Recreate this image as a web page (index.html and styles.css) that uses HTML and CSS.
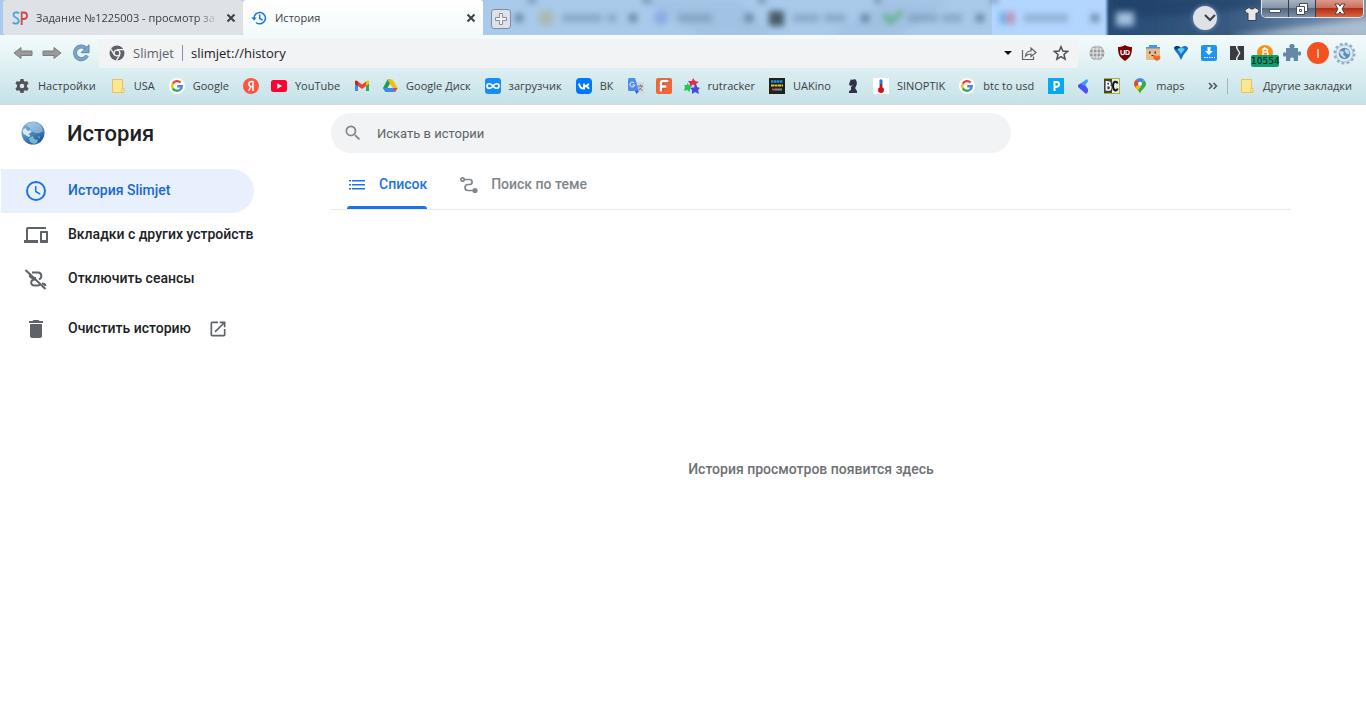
FILE: index.html
```
<!DOCTYPE html>
<html lang="ru">
<head>
    <meta charset="UTF-8">
    <title>История</title>
    <link rel="stylesheet" href="styles.css">
</head>
<body>
<svg class="defs" aria-hidden="true">
    <symbol id="folder" viewBox="0 0 16 16"><path d="M2.500 1.500h10v9h1.500v4h-11.500z" fill="#ffe694" stroke="#eac54b"/><path d="M11.500 14v-2.500l1-1.500" fill="none" stroke="#eac54b"/></symbol>
    <symbol id="google" viewBox="0 0 16 16">
        <circle cx="8" cy="8" r="8" fill="#fff"/>
        <g fill="none" stroke-width="2.400">
            <path d="M11.500 4.600A4.800 4.800 0 0 0 3.800 5.700" stroke="#ea4335"/>
            <path d="M3.800 5.700a4.800 4.800 0 0 0 0 4.600" stroke="#fbbc05"/>
            <path d="M3.800 10.300a4.800 4.800 0 0 0 7.300 1.300" stroke="#34a853"/>
            <path d="M11.100 11.600A4.600 4.600 0 0 0 12.700 8.200H8.200" stroke="#4285f4"/>
        </g>
    </symbol>
    <linearGradient id="sky" x1="0" y1="0" x2="0.600" y2="1"><stop offset="0" stop-color="#8db8dc"/><stop offset=".45" stop-color="#5a97cb"/><stop offset="1" stop-color="#1d5796"/></linearGradient>
    <symbol id="earth" viewBox="0 0 24 24">
        <circle cx="12" cy="12" r="11.500" fill="url(#sky)"/>
        <path d="M1.500 9l3-2 2 3 3-1 1 2-3 2 2 2-2 1-3-2-2-1z" fill="#eef6f8" opacity=".85"/>
        <path d="M8 17l4-2 1 3 4 1-1 3-3 1-4-2zM17 15l2 1-1 2z" fill="#8fd0dd" opacity=".75"/>
        <path d="M5 4a10 10 0 0 1 17 6c-3 3-9 3-12-1-1-2-3-3-5-5z" fill="#e3f1fa" opacity=".4"/>
    </symbol>
</svg>

<header class="browser">
    <div class="tabstrip">
        <!-- соседние окна за стеклом -->
        <svg class="glass" aria-hidden="true">
            <defs>
                <filter id="soft" x="-50%" y="-50%" width="200%" height="200%"><feGaussianBlur stdDeviation="3"/></filter>
                <filter id="edge" x="-10%" y="-50%" width="120%" height="200%"><feGaussianBlur stdDeviation="1.500"/></filter>
                <linearGradient id="dark"><stop offset="0" stop-color="#244a74"/><stop offset=".4" stop-color="#38597f"/><stop offset=".62" stop-color="#5a7a9d"/><stop offset="1" stop-color="#8ba3bd"/></linearGradient>
            </defs>
            <path d="M640 0l60 35h70l-30-35zM830 35l60-35h60l-50 35z" fill="#91b1d6" opacity=".3" filter="url(#soft)"/>
            <rect x="992" y="0" width="116" height="35" fill="#b2d6fe"/>
            <rect x="1107" y="-20" width="300" height="80" fill="url(#dark)" filter="url(#edge)"/>
            <path d="M1112 -5h150v12l-90 9-60 2z" fill="#1b3d66" opacity=".6" filter="url(#soft)"/>
            <path d="M1230 36l140-18v20z" fill="#c2d0df" opacity=".7" filter="url(#soft)"/>
            <g filter="url(#soft)">
                <g fill="#4f6987">
                    <path d="M515 14h8v8h-8zM629 14h8v8h-8zM745 14h8v8h-8zM861 14h8v8h-8zM976 14h8v8h-8zM1091 14h8v8h-8z" opacity=".75"/>
                    <path d="M562 14h40v8h-40zM607 14h10v8h-10zM678 14h34v8h-34zM793 14h26v8h-26zM824 14h22v8h-22zM908 14h30v8h-30zM942 14h20v8h-20zM1024 14h44v8h-44z" opacity=".35"/>
                    <path d="M528-3h8v6h-8zM643-3h8v6h-8zM758-3h8v6h-8zM874-3h8v6h-8zM990-3h8v6h-8z" opacity=".6"/>
                </g>
                <path d="M539 11h14v14h-14z" fill="#a9b09a" opacity=".7"/>
                <circle cx="661" cy="18" r="7" fill="#7fa2e2" opacity=".8"/>
                <path d="M769 11h15v15h-15z" fill="#4a5a68"/>
                <path d="M884 14l6 8 12-10" fill="none" stroke="#53ae70" stroke-width="4"/>
                <path d="M1000 12h7v12h-7z" fill="#4595d5" opacity=".7"/><path d="M1008 12h6v12h-6z" fill="#cb5c72" opacity=".7"/>
                <path d="M1116 12h18v14h-18z" fill="#a3c0dd"/>
            </g>
        </svg>
        <div class="tab">
            <svg class="icon" viewBox="0 0 16 16"><g fill="none" stroke-width="1.800"><path d="M7 3.500C5 1.500 1.500 2 1.500 4.700c0 3.500 5.300 2.600 5.300 6C6.800 14 3 14.500.7 12.500" stroke="#42a5de"/><path d="M9.700 15V2.500h2c4.500 0 4.500 6.500 0 6.500h-2" stroke="#d0484d"/></g></svg>
            <span class="tab-title faded">Задание №1225003 - просмотр за</span>
            <button class="tab-close" aria-label="Закрыть"><svg viewBox="0 0 10 10"><path d="M1.500 1.500l7 7M8.500 1.500l-7 7"/></svg></button>
        </div>
        <div class="tab active">
            <svg class="icon" viewBox="0 0 16 16"><g fill="none" stroke="#1a73e8" stroke-width="1.500"><path d="M3 8.500A5.700 5.700 0 1 1 5 12.500M8.700 4.500v4l3 1.700"/></g><path d="M.3 7.500h5.400L3 10.500z" fill="#1a73e8"/></svg>
            <span class="tab-title">История</span>
            <button class="tab-close" aria-label="Закрыть"><svg viewBox="0 0 10 10"><path d="M1.500 1.500l7 7M8.500 1.500l-7 7"/></svg></button>
        </div>
        <button class="new-tab" aria-label="Новая вкладка"><svg viewBox="0 0 18 18"><path d="M7.500 3.500h3v4h4v3h-4v4h-3v-4h-4v-3h4z" fill="#f1f3f5" stroke="#8b8f94"/></svg></button>
        <div class="window-tools">
            <button class="tab-search" aria-label="Поиск вкладок"><svg viewBox="0 0 24 24"><path d="M12 9l5 5 5-5" fill="none" stroke="#3c4043" stroke-width="2"/></svg></button>
            <button class="skin" aria-label="Темы"><svg class="icon" viewBox="0 0 16 16"><path d="M5 1.500L.7 4l1.800 3.500L4 7v7.500h8V7l1.500.5L15.300 4 11 1.500c-1.500 2-4.500 2-6 0z" fill="#e8e8e8" stroke="#37414c"/></svg></button>
            <div class="window-buttons">
                <button aria-label="Свернуть"><svg viewBox="0 0 14 14"><path d="M1.500 7.500h11v3h-11z" fill="#fff" stroke="#47505c"/></svg></button>
                <button aria-label="Развернуть"><svg viewBox="0 0 14 14"><path d="M4.500 1.500h8v8h-8z" fill="#fff" stroke="#47505c"/><path d="M1.500 4.500h8v8h-8zM4.500 7.500h2v2h-2z" fill="#fff" stroke="#47505c"/></svg></button>
                <button class="close" aria-label="Закрыть окно"><svg viewBox="0 0 14 14"><path d="M2 2h3.500L7 4.200 8.500 2H12L9 7l3 5H8.500L7 9.800 5.500 12H2l3-5z" fill="#fff" stroke="#593c40"/></svg></button>
            </div>
        </div>
    </div>

    <div class="toolbar">
        <nav class="nav-buttons">
            <button aria-label="Назад"><svg viewBox="0 0 20 16"><path d="M1 8l7-5.500v3.500h11v4.500H8v3z" fill="#999" stroke="#7d7d7d"/></svg></button>
            <button aria-label="Вперёд"><svg viewBox="0 0 20 16"><path d="M19 8l-7-5.500v3.500H1v4.500h11v3z" fill="#999" stroke="#7d7d7d"/></svg></button>
            <button aria-label="Обновить"><svg viewBox="0 0 20 18"><path d="M14.500 4.200a6.300 6.300 0 1 0 1.500 7.300" fill="none" stroke="#5f87a9" stroke-width="4"/><path d="M14.500 4.200a6.300 6.300 0 1 0 1.500 7.300" fill="none" stroke="#7ca5c8" stroke-width="2.500"/><path d="M18 .7v8h-8z" fill="#7ca5c8" stroke="#5f87a9"/></svg></button>
        </nav>
        <div class="omnibox">
            <svg class="chromium" viewBox="0 0 16 16"><circle cx="8" cy="8" r="7.500" fill="#5f6368"/><circle cx="8" cy="8" r="2.900" fill="#5f6368" stroke="#f1f3f4" stroke-width="1.300"/><path d="M8 4.700h7M5.200 9.700L1.700 3.900M10.900 9.700l-3.500 6" stroke="#f1f3f4" stroke-width="1.300"/></svg>
            <span class="origin">Slimjet</span>
            <input class="url" type="text" aria-label="Адрес" value="slimjet://history">
            <button aria-label="Список адресов"><svg viewBox="0 0 16 16"><path d="M4 6h8l-4 4z" fill="#111"/></svg></button>
            <button aria-label="Поделиться"><svg viewBox="0 0 16 16"><path d="M1.500 5v9.500h11v-3M4.500 11c.5-3.500 2-5 5.500-5V3l5 4.500-5 4V9c-2.500 0-4 .4-5.500 2z" fill="none" stroke="#5f6368" stroke-width="1.200"/></svg></button>
            <button class="star" aria-label="Добавить в закладки"><svg viewBox="0 0 16 16"><path d="M8 1.700l1.900 4.300 4.700.4-3.600 3.100 1.100 4.600L8 11.700l-4.100 2.400L5 9.500 1.400 6.400 6.100 6z" fill="none" stroke="#4d5156" stroke-width="1.500"/></svg></button>
        </div>
        <div class="extensions">
            <button aria-label="Прокси"><svg viewBox="0 0 16 16"><circle cx="8" cy="8" r="7.500" fill="#9b9b9b"/><path d="M8 0v16M0 8h16M1.500 4h13M1.500 12h13" stroke="#e7eded" fill="none"/><ellipse cx="8" cy="8" rx="4" ry="7.500" stroke="#e7eded" fill="none"/></svg></button>
            <button aria-label="uBlock Origin"><svg viewBox="0 0 16 16"><path d="M8 0c2 1.500 4.500 2 7 2 0 7-1 10-7 14C2 12 1 9 1 2c2.500 0 5-.5 7-2z" fill="#800000"/><path d="M4 5v3a1.700 1.700 0 0 0 3.400 0V5M9 5.500v4h1.300a2 2 0 0 0 0-4z" fill="none" stroke="#fff" stroke-width="1.200"/></svg></button>
            <button aria-label="Покупки"><svg viewBox="0 0 16 16"><path d="M4 3V0h8v3" fill="#4a93e1"/><rect x="1" y="2" width="14" height="13" rx="1" fill="#e8bb88"/><path d="M1 2h14v1.500H1z" fill="#4a93e1"/><path d="M4 6.500h1.500v2H4zM9.500 6.500H11v2H9.500zM6.500 10h2v1h-2z" fill="#3d332d"/><path d="M8 11.500c1-2 3-1 3.500 0 1-2 4-1 4 1 0 1.500-2 2.500-3.500 3.500-2-1-4-2.500-4-4.500z" fill="#f1682f"/></svg></button>
            <button aria-label="Фильтр"><svg viewBox="0 0 16 16"><path d="M1 3c2-3 5-2 7 0 2-2 5-3 7 0 0 3-4 5-5 8l-2 4-2-4C5 8 1 6 1 3z" fill="#1674ce"/><path d="M8 15V8L1 3c2-3 5-2 7 0z" fill="#0b3b80"/><path d="M4 4q4-2 8 0L8 9z" fill="#60cdf4"/></svg></button>
            <button aria-label="Загрузки"><svg viewBox="0 0 16 16"><rect width="16" height="16" rx="2" fill="#2094f3"/><path d="M6.500 2h3v4H12L8 10 4 6h2.500z" fill="#fff"/><path d="M3 12.500h11" stroke="#fff" stroke-dasharray="1.500 1"/></svg></button>
            <button aria-label="Тёмная тема"><svg viewBox="0 0 16 16"><path d="M1 1h6v2l3 5-3 5v2H1zM8.500 1H15v14H8.500v-2l3-5-3-5z" fill="#383b40"/></svg></button>
            <button class="btc" aria-label="Курс биткоина"><svg viewBox="0 0 16 16"><circle cx="8" cy="8" r="8" fill="#f7931a"/><path d="M6 3.500v8M6 4h3c2 0 2 3 0 3H6h3.500c2 0 2 3.500 0 3.500H6M7.700 2v2" fill="none" stroke="#fff" stroke-width="1.300"/></svg><span class="badge">10554</span></button>
            <button class="narrow" aria-label="Расширения"><svg class="puzzle" viewBox="0 0 18 18"><path d="M3 4h4C5.500 2 6.500 0 9 0s3.500 2 2 4h4v4c2-1.500 3-.5 3 1.500s-1 3-3 1.500v6h-4.500c1-2.500 0-3.500-1.500-3.500S6.500 14.500 7.500 17H3v-5c-2 1.500-3 .5-3-1.500S1 7.500 3 9z" fill="#6488a8"/></svg></button>
            <button class="narrow" aria-label="Профиль"><span class="avatar">I</span></button>
            <button class="narrow" aria-label="Меню"><svg class="gear" viewBox="0 0 24 24"><circle cx="12" cy="12" r="10" fill="none" stroke="#8fb2cc" stroke-width="3" stroke-dasharray="3 2.230"/><circle cx="12" cy="12" r="9" fill="#dfebf5" stroke="#9dbbd2"/><circle cx="12" cy="12" r="6" fill="#5c8db3"/><path d="M6.500 10l3-1 2 2-1 2 3 3-2 1-4-4zM13 7l4 2 0 4-3-1-2-3z" fill="#c4dcea"/></svg></button>
        </div>
    </div>

    <nav class="bookmarks">
        <a href="#"><svg class="icon" viewBox="0 0 16 16"><path d="M6.500 1h3l.4 2 1.300.7 1.900-.7 1.500 2.600L13 7v2l1.600 1.400-1.500 2.600-1.900-.7-1.300.7-.4 2h-3L6 13l-1.200-.7-1.900.7-1.500-2.600L3 9V7L1.400 5.600 2.900 3l1.900.7L6.100 3zM8 5.700a2.300 2.300 0 1 0 0 4.600 2.300 2.300 0 0 0 0-4.600z" fill="#505459"/></svg><span>Настройки</span></a>
        <a href="#"><svg class="icon"><use href="#folder"/></svg><span>USA</span></a>
        <a href="#"><svg class="icon"><use href="#google"/></svg><span>Google</span></a>
        <a href="#" aria-label="Яндекс"><svg class="icon" viewBox="0 0 16 16"><circle cx="8" cy="8" r="8" fill="#fc5540"/><path d="M10 13V3.500H8.500c-3.500 0-3.500 5 0 5H10M8 8.500L5.500 13" fill="none" stroke="#fff" stroke-width="1.500"/></svg></a>
        <a href="#"><svg class="icon" viewBox="0 0 16 16"><rect y="2" width="16" height="12" rx="2.500" fill="#f03"/><path d="M6.300 5.300L11 8l-4.700 2.700z" fill="#fff"/></svg><span>YouTube</span></a>
        <a href="#" aria-label="Gmail"><svg class="icon" viewBox="0 0 16 16"><path d="M1 4v9h3V6z" fill="#4285f4"/><path d="M12 6v7h3V4z" fill="#34a853"/><path d="M12 3.500V8l3-2.200V3.500c0-1.500-1.500-1.500-3 0z" fill="#fbbc04"/><path d="M4 3.500L8 6.500l4-3V8l-4 3-4-3z" fill="#ea4335"/><path d="M1 3.500v2.300L4 8V3.500c-1.500-1.500-3-1.500-3 0z" fill="#c5221f"/></svg></a>
        <a href="#"><svg class="icon" viewBox="0 0 16 16"><path d="M5.500 1.500h2.700L9.500 4l-5.700 9.800H3.500L1 10z" fill="#19a05b"/><path d="M5.500 1.500h5L15.500 10h-5z" fill="#fbbc04"/><path d="M1 10h14.500L13 14H3.500z" fill="#4285f4"/><path d="M15.500 10h-4L13 14z" fill="#ea4335"/><path d="M8 5.500L5.500 10h5z" fill="#d8edf0"/></svg><span>Google Диск</span></a>
        <a href="#"><svg class="icon" viewBox="0 0 16 16"><rect width="16" height="16" rx="3" fill="#188dfa"/><path d="M8 8c-2-3-6-3-6 0s4 3 6 0 6-3 6 0-4 3-6 0z" fill="none" stroke="#fff" stroke-width="1.700"/></svg><span>загрузчик</span></a>
        <a href="#"><svg class="icon" viewBox="0 0 16 16"><rect width="16" height="16" rx="4" fill="#07f"/><path d="M3 5.500c.5 3.500 2 5.200 5 5.200V5.500M12.800 5.500C12 7.300 10.500 8.200 8.300 8.200c2.500 0 4 1 4.700 2.600" fill="none" stroke="#fff" stroke-width="1.800"/></svg><span>ВК</span></a>
        <a href="#" aria-label="Переводчик"><svg class="icon" viewBox="0 0 16 16"><path d="M7 4h9v12h-5z" fill="#d5d7dc"/><path d="M0 1.500C0 .7.500 0 1.500 0H7l4 13H1.500C.6 13 0 12.500 0 11.500z" fill="#4d8af3"/><path d="M7 13h4l-2.500 3z" fill="#2855c7"/><path d="M6.200 5a2.400 2.400 0 1 0 .5 2H4.600" fill="none" stroke="#fff"/><path d="M10 8h5M12.500 6.500V8M14 8c-.5 2-1.500 3-3 4M11 9.500l3.500 3.500" fill="none" stroke="#6f7c87"/></svg></a>
        <a href="#" aria-label="Форум"><svg class="icon" viewBox="0 0 16 16"><rect width="16" height="16" rx="2" fill="#f16536"/><path d="M5.500 13.500V5q0-2 2-2H13M5.500 8.500H11" fill="none" stroke="#a84024" stroke-width="3.500"/><path d="M5 13.500V5q0-2 2-2h5.500M5 8.500h5.500" fill="none" stroke="#fff" stroke-width="2.500"/></svg></a>
        <a href="#"><svg class="icon" viewBox="0 0 16 16"><path d="M9 0l2 3 4 1-3 2 1 4-4-2-4 1 1-3-2-3 4 0z" fill="#e52b4b"/><path d="M3 5l2 2 4 1-3 2 0 4-3-2-3 1 1-4-1-2h3z" fill="#20c860"/><path d="M12 6l1 3 3 1-2 2 1 4-4-2-3 2 0-4-2-2 4-1z" fill="#4448e4"/><circle cx="9" cy="8" r="1.500" fill="#f1cae0"/></svg><span>rutracker</span></a>
        <a href="#"><svg class="icon" viewBox="0 0 16 16"><path d="M0 0h16v16H0z" fill="#20201e"/><path d="M2 3.500h12" stroke="#1493eb" stroke-width="2.500" stroke-dasharray="2.500 .5"/><path d="M2 7.500h12" stroke="#f0c51a" stroke-width="2" stroke-dasharray="3 .5"/><path d="M3 11.500h3" stroke="#b4542b" stroke-width="2"/><path d="M6 11.500h7" stroke="#758da0" stroke-width="2"/></svg><span>UAKino</span></a>
        <a href="#" aria-label="Шахматы"><svg class="icon" viewBox="0 0 16 16"><path d="M6 1l1 1 3-1c3 3 2 6 0 9l2 3v2H4v-2l2-1V9l2-2-3 1-1-2z" fill="#30304a"/></svg></a>
        <a href="#"><svg class="icon" viewBox="0 0 16 16"><path d="M0 0h16v16H0z" fill="#fff"/><path d="M6.500 2q1.500-1.500 3 0v7h-3z" fill="#2a7fd4"/><circle cx="8" cy="12" r="3" fill="#d40f16"/><path d="M8 6v6" stroke="#d40f16" stroke-width="2"/></svg><span>SINOPTIK</span></a>
        <a href="#"><svg class="icon"><use href="#google"/></svg><span>btc to usd</span></a>
        <a href="#" aria-label="P"><svg class="icon" viewBox="0 0 16 16"><path d="M0 0h16v16H0z" fill="#08a9f4"/><path d="M6.500 13V4h2.200c3 0 3 4.700 0 4.700H6.500" fill="none" stroke="#fff" stroke-width="2"/></svg></a>
        <a href="#" aria-label="Flutter"><svg class="icon" viewBox="0 0 16 16"><path d="M7 4l5-1-3 4 3 4 0 3-2 2L2 9V7z" fill="#4c52f5"/><path d="M8 3l3-2 1 2-3 3 1 2-3-1-2-1z" fill="#35a5ff"/></svg></a>
        <a href="#" aria-label="BC"><svg class="icon" viewBox="0 0 16 16"><path d="M0 0h16v16H0z" fill="#9dbb25"/><path d="M0 1h8v14H0z" fill="#424242"/><path d="M8 1h7v14H8z" fill="#e8e8e8"/><path d="M2.500 3v9.500M2.500 4h2c2 0 2 3.500 0 3.500h-2 2.500c2.500 0 2 4.500 0 4.500H2.500" fill="none" stroke="#fff" stroke-width="1.700"/><path d="M13.500 5.500C12.500 2.500 9 3 9 8s3.500 5.500 4.700 2.500" fill="none" stroke="#141414" stroke-width="2"/></svg></a>
        <a href="#"><svg class="icon" viewBox="0 0 16 16"><path d="M8 16C7.500 12 2 10 2 5.500h12C14 10 8.500 12 8 16z" fill="#34a853"/><path d="M3.500 9.500L12 2q2 1.500 2 4-1 3-4 5z" fill="#34a853"/><path d="M2 6q0-3 2-4.500L8 5 3.500 9.500z" fill="#ea4335"/><path d="M3 9l5-3 1 3-3.500 3.500z" fill="#fbbc04"/><path d="M4 1.500q4-3 8 0L8 6z" fill="#4285f4"/><circle cx="8" cy="5.700" r="2" fill="#fff"/></svg><span>maps</span></a>
        <div class="bookmarks-end">
            <button aria-label="Ещё закладки"><svg viewBox="0 0 16 16"><path d="M4 5l3 3-3 3M8.500 5l3 3-3 3" fill="none" stroke="#4d5156" stroke-width="1.500"/></svg></button>
            <a class="other" href="#"><svg class="icon"><use href="#folder"/></svg><span>Другие закладки</span></a>
        </div>
    </nav>
</header>

<div class="page">
    <aside class="sidebar">
        <div class="brand">
            <svg class="logo"><use href="#earth"/></svg>
            <h1>История</h1>
        </div>
        <nav class="menu">
            <a class="selected" href="#"><svg viewBox="0 0 24 24"><circle cx="12" cy="12" r="9" fill="none" stroke="currentColor" stroke-width="2"/><path d="M11.700 7v5.500l4.500 2.700" fill="none" stroke="currentColor" stroke-width="1.500"/></svg><span>История Slimjet</span></a>
            <a href="#"><svg viewBox="0 0 24 24"><path d="M4 6h18V4H4c-1.100 0-2 .9-2 2v11H0v3h14v-3H4V6zm19 2h-6c-.55 0-1 .45-1 1v10c0 .55.450 1 1 1h6c.55 0 1-.45 1-1V9c0-.55-.45-1-1-1zm-1 9h-4v-7h4v7z" fill="currentColor"/></svg><span>Вкладки с других устройств</span></a>
            <a href="#"><svg viewBox="0 0 24 24"><g fill="none" stroke="currentColor" stroke-width="2"><path d="M1.500 3l20 19"/><path d="M8 5.500h6a3.500 3.500 0 0 1 1 6.800M12 11H8.500C6 11 5.500 8.500 6 7.500M11 12.500c-5 0-5 6-.5 6h3c1.500 0 2.500-.5 3-1.500M18 16.500q3 0 3.500 2.500"/></g></svg><span>Отключить сеансы</span></a>
            <a class="clear" href="#"><svg viewBox="0 0 24 24"><path d="M6 19c0 1.100.9 2 2 2h8c1.100 0 2-.9 2-2V7H6v12zM19 4h-3.500l-1-1h-5l-1 1H5v2h14V4z" fill="currentColor"/></svg><span>Очистить историю</span><svg class="external" viewBox="0 0 24 24"><path d="M19 19H5V5h7V3H5a2 2 0 0 0-2 2v14a2 2 0 0 0 2 2h14c1.100 0 2-.9 2-2v-7h-2v7zM14 3v2h3.590l-9.830 9.830 1.410 1.410L19 6.410V10h2V3h-7z" fill="currentColor"/></svg></a>
        </nav>
    </aside>
    <main class="content">
        <label class="search">
            <svg viewBox="0 0 24 24"><path d="M15.500 14h-.79l-.28-.27A6.470 6.470 0 0 0 16 9.500 6.500 6.500 0 1 0 9.500 16c1.610 0 3.090-.59 4.230-1.570l.27.28v.79l5 4.990L20.490 19l-4.990-5zm-6 0C7.010 14 5 11.990 5 9.500S7.010 5 9.500 5 14 7.010 14 9.500 11.990 14 9.500 14z" fill="#80868b"/></svg>
            <input type="search" placeholder="Искать в истории" aria-label="Искать в истории">
        </label>
        <div class="views" role="tablist">
            <button class="current" role="tab" aria-selected="true"><svg viewBox="0 0 20 20"><path d="M2 5h2v1.500H2zM2 9h2v1.500H2zM2 13h2v1.500H2zM5 5h13v1.500H5zM5 9h13v1.500H5zM5 13h13v1.500H5z" fill="currentColor"/></svg><span>Список</span></button>
            <button role="tab" aria-selected="false"><svg viewBox="0 0 20 20"><g fill="none" stroke="currentColor" stroke-width="1.700"><circle cx="3.500" cy="4.500" r="1.700"/><path d="M5 4.500h5.500c3.500 0 3.500 5 0 5H9c-4 0-4 6 0 6h6"/></g><circle cx="16" cy="15.500" r="2.600" fill="currentColor"/></svg><span>Поиск по теме</span></button>
        </div>
        <p class="empty">История просмотров появится здесь</p>
    </main>
</div>
</body>
</html>
```
FILE: styles.css
```
*{
    box-sizing: border-box;
}
body{
    margin: 0;
    height: 100vh;
    display: flex;
    flex-direction: column;
    background-color: #fff;
    font-family: Roboto, "Liberation Sans", sans-serif;
    color: #202124;
}
button{
    border: none;
    padding: 0;
    background: none;
    font-family: inherit;
    display: flex;
    align-items: center;
    justify-content: center;
}
a{
    color: inherit;
    text-decoration: none;
}
svg{
    flex: none;
    display: block;
}
.defs{
    position: absolute;
    width: 0;
    height: 0;
}
.icon{
    width: 16px;
    height: 16px;
}

/* окно браузера */
.browser{
    background: linear-gradient(#fff, #f0f9fa 40%, #dceff2 66%, #c5e2e7);
    border-bottom: 1px solid #d5d7da;
    font-family: "Open Sans", "Noto Sans", sans-serif;
    color: #3c4043;
}
.tabstrip{
    position: relative;
    display: flex;
    height: 35px;
    padding-left: 3px;
    background-color: #a9caea;
    font-size: 11px;
}
.glass{
    position: absolute;
    top: 0;
    left: 0;
    width: 100%;
    height: 35px;
}
.tab{
    position: relative;
    display: flex;
    align-items: center;
    width: 240px;
    padding: 0 7px 0 9px;
    gap: 8px;
    background-color: #dee1e6;
    border-radius: 3px;
}
.tab.active{
    padding-left: 8px;
    background: linear-gradient(#fff, #f3fafb);
    border-radius: 3px 3px 0 0;
}
.tab-title{
    flex: 1;
    overflow: hidden;
    white-space: nowrap;
}
.faded{
    -webkit-mask-image: linear-gradient(90deg, #000 160px, transparent 182px);
    mask-image: linear-gradient(90deg, #000 160px, transparent 182px);
}
.tab-close svg{
    width: 10px;
    height: 10px;
    fill: none;
    stroke: #3c4043;
    stroke-width: 2;
}
.new-tab{
    position: relative;
    align-self: center;
    width: 20px;
    height: 20px;
    margin: 2px 0 0 8px;
    border: 1px solid #858c95;
    border-radius: 3px;
    background-color: #dbe2eb;
}
.new-tab svg{
    width: 18px;
    height: 18px;
}
.window-tools{
    position: relative;
    display: flex;
    align-items: flex-start;
    margin-left: auto;
    padding-right: 2px;
}
.tab-search{
    width: 24px;
    height: 24px;
    margin-top: 6px;
    border-radius: 12px;
    background-color: #dee1e6;
    box-shadow: 0 0 5px #7f9cbd;
}
.tab-search svg{
    width: 24px;
    height: 24px;
}
.skin{
    margin: 6px 1px 0 27px;
}
.window-buttons{
    display: flex;
    height: 18px;
    border: 1px solid #e3e8ee;
    border-top: none;
    border-radius: 0 0 5px 5px;
    overflow: hidden;
}
.window-buttons button{
    width: 27px;
    border-right: 1px solid #303e50;
    background: linear-gradient(#a9b4c2, #8695aa 45%, #56677f 50%, #7d90a8);
}
.window-buttons .close{
    width: 47px;
    border-right: none;
    background: linear-gradient(#dc9a8b, #c9705d 45%, #b22f17 50%, #d8663e);
}
.window-buttons svg{
    width: 14px;
    height: 14px;
}

.toolbar{
    display: flex;
    align-items: center;
    height: 36px;
    padding: 0 9px 0 13px;
}
.nav-buttons{
    display: flex;
    gap: 9px;
    margin-right: 8px;
}
.nav-buttons svg{
    width: 20px;
    height: 18px;
}
.omnibox{
    flex: 1;
    display: flex;
    align-items: center;
    height: 29px;
    padding: 0 9px 0 10px;
    border-radius: 3px;
    background-color: #f1f3f4;
    font-size: 13px;
}
.chromium{
    width: 16px;
    height: 16px;
    margin-right: 8px;
}
.origin{
    padding-right: 8px;
    border-right: 1px solid #8c9094;
    color: #5f6368;
    line-height: 16px;
}
.url{
    flex: 1;
    min-width: 0;
    padding: 0 8px;
    border: none;
    outline: none;
    background: none;
    font: inherit;
    color: #202124;
}
.omnibox button svg{
    width: 16px;
    height: 16px;
    margin-left: 5px;
}
.omnibox .star svg{
    margin-left: 16px;
}
.extensions{
    display: flex;
    align-items: center;
    margin-left: 5px;
}
.extensions button{
    position: relative;
    width: 28px;
    height: 28px;
}
.extensions .narrow{
    width: 26px;
}
.extensions svg{
    width: 16px;
    height: 16px;
}
.extensions .puzzle{
    width: 18px;
    height: 18px;
}
.extensions .gear{
    width: 23px;
    height: 23px;
}
.badge{
    position: absolute;
    left: 0;
    bottom: 0;
    width: 28px;
    height: 12px;
    border-radius: 2px;
    background-color: #0f9d6c;
    color: #111;
    font: 9px/12px "DejaVu Sans", sans-serif;
}
.avatar{
    width: 22px;
    height: 22px;
    border-radius: 11px;
    background-color: #f4511e;
    color: #fff;
    font: 13px/22px "Open Sans", sans-serif;
}

.bookmarks{
    display: flex;
    align-items: center;
    height: 33px;
    padding: 0 6px 3px 8px;
}
.bookmarks a{
    display: flex;
    align-items: center;
    gap: 8px;
    padding: 0 6px;
    font-size: 11px;
    line-height: 16px;
    white-space: nowrap;
}
.bookmarks a span{
    padding-right: 2px;
}
.bookmarks-end{
    display: flex;
    align-items: center;
    margin-left: auto;
}
.bookmarks-end svg{
    width: 16px;
    height: 16px;
}
.bookmarks-end button{
    margin-right: 6px;
}
.bookmarks .other{
    padding-left: 11px;
    border-left: 1px solid #a3b5b9;
}

/* страница истории */
.page{
    flex: 1;
    display: flex;
}
.sidebar{
    width: 256px;
}
.brand{
    display: flex;
    align-items: center;
    gap: 22px;
    height: 56px;
    padding-left: 21px;
}
.logo{
    width: 24px;
    height: 24px;
}
h1{
    margin: 0;
    font-size: 22px;
    font-weight: 500;
}
.menu{
    padding: 8px 2px 0 1px;
}
.menu a{
    display: flex;
    align-items: center;
    gap: 20px;
    height: 44px;
    padding-left: 23px;
    border-radius: 0 22px 22px 0;
    font-size: 14px;
    font-weight: 500;
    white-space: nowrap;
}
.menu span,
.views span{
    padding-bottom: 2px;
}
.menu svg{
    width: 24px;
    height: 24px;
    color: #5f6368;
}
.menu .selected{
    background-color: #e8f0fe;
    color: #1967d2;
}
.menu .selected svg{
    color: #1a73e8;
}
.menu .clear{
    margin-top: 6px;
}
.menu .external{
    width: 20px;
    height: 20px;
    margin-left: -3px;
}
.content{
    flex: 1;
    display: flex;
    flex-direction: column;
    max-width: 1110px;
    margin: 0 auto;
    padding: 8px 75px 0;
}
.search{
    display: flex;
    align-items: center;
    gap: 14px;
    max-width: 680px;
    height: 40px;
    padding: 0 12px;
    border-radius: 20px;
    background-color: #f1f3f4;
}
.search svg{
    width: 20px;
    height: 20px;
}
.search input{
    flex: 1;
    padding: 0;
    border: none;
    outline: none;
    background: none;
    font: 13px Roboto, sans-serif;
}
.search input::placeholder{
    color: #5f6368;
}
.views{
    display: flex;
    gap: 32px;
    height: 57px;
    padding: 8px 16px 0;
    border-bottom: 1px solid #e8eaed;
}
.views button{
    position: relative;
    gap: 12px;
    color: #80868b;
    font-size: 14px;
    font-weight: 500;
}
.views .current{
    color: #1a73e8;
}
.views .current::after{
    content: "";
    position: absolute;
    left: 0;
    right: 0;
    bottom: 0;
    height: 3px;
    border-radius: 3px 3px 0 0;
    background-color: #1a73e8;
}
.views svg{
    width: 20px;
    height: 20px;
}
.empty{
    flex: 1;
    display: flex;
    align-items: center;
    justify-content: center;
    margin: 0;
    color: #6e7175;
    font-size: 14px;
    font-weight: 500;
}
```
